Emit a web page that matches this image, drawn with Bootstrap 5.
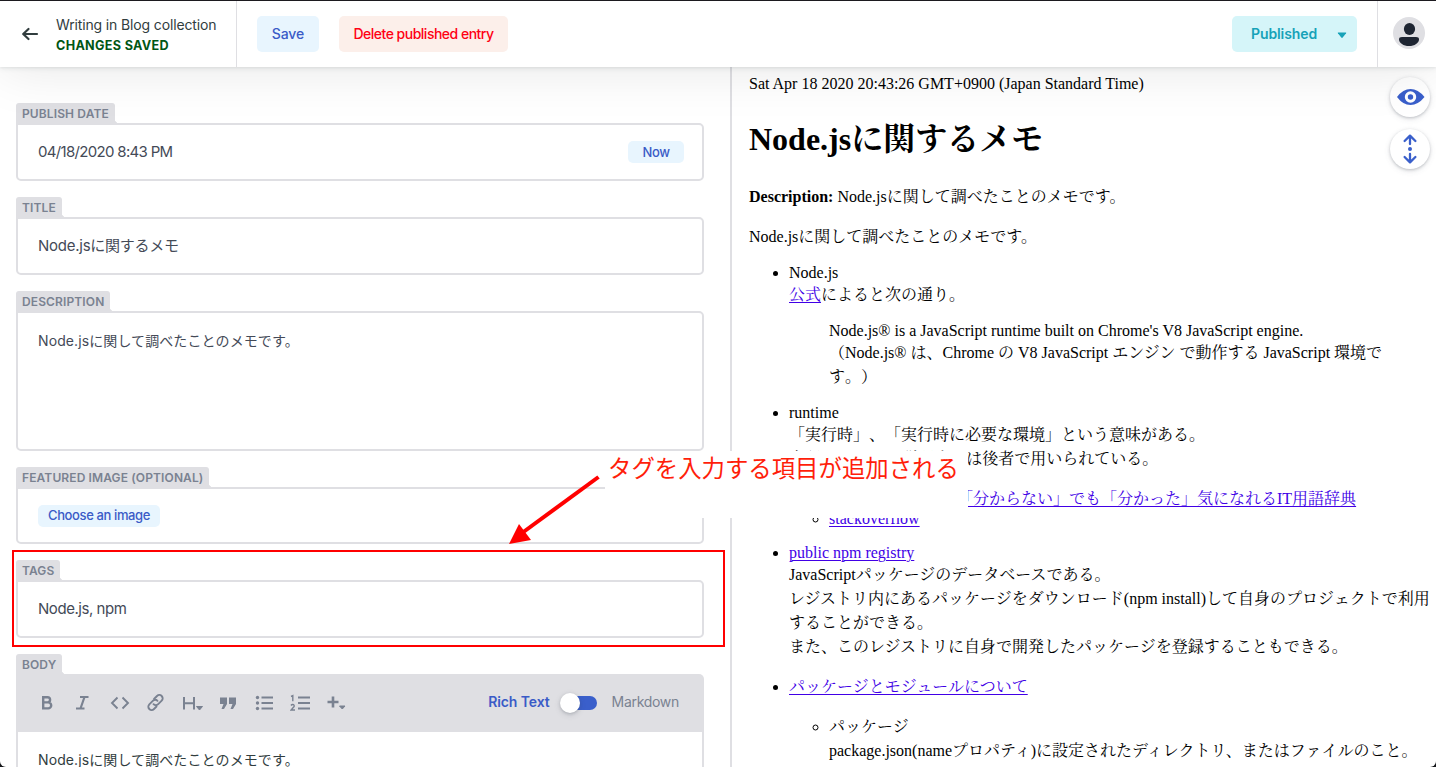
<!DOCTYPE html>
<html lang="ja">
<head>
<meta charset="utf-8">
<meta name="viewport" content="width=device-width, initial-scale=1">
<title>Writing in Blog collection</title>
<link href="https://cdn.jsdelivr.net/npm/bootstrap@5.3.0/dist/css/bootstrap.min.css" rel="stylesheet">
<style>
  html, body { height: 100%; overflow: hidden; background: #15161a; }
  body { font-family: Inter, "Noto Sans CJK JP", sans-serif; font-size: 14px; color: #444a57; }
  .editor { height: 767px; background: #fff; border-radius: 0 0 6px 6px; }
  .topbar { height: 67px; border-top: 1px solid #1c1a1f; background: #fff; z-index: 5; box-shadow: 0 2px 6px rgba(68,74,87,.05), 0 1px 3px rgba(68,74,87,.1), 0 2px 54px rgba(0,0,0,.1); }
  .back-link { width: 237px; border-right: 1px solid #dfdfe3; padding: 0 0 0 21px; }
  .back-text { line-height: 20px; margin: 14px 0 0 17px; }
  .crumb { font-size: 14px; color: #313d3e; letter-spacing: -.14px; }
  .saved { font-size: 12.6px; line-height: 22px; font-weight: 700; color: #005614; letter-spacing: .33px; }
  .tool-btn { height: 36px; border: 0; border-radius: 5px; font-size: 14px; font-weight: 500; padding: 0 0 2px; }
  .btn-soft { background: #e8f5fe; color: #3a5bc7; }
  .btn-save { width: 62px; margin-left: 20px; letter-spacing: -.1px; }
  .btn-del { width: 169px; margin-left: 20px; background: #fcefea; color: #ff0014; letter-spacing: -.5px; }
  .btn-pub { width: 125px; background: #d5f5f9; color: #17a2b8; font-weight: 600; padding: 0 10px 2px 19px; margin-right: 20px; letter-spacing: -.1px; }
  .avatar-cell { width: 59px; border-left: 1px solid #dfdfe3; padding: 0 0 2px 15px; }
  .form-pane { width: 730px; padding: 36px 26px 0 16px; }
  .field { margin-bottom: 16px; }
  .field-label { display: block; width: max-content; height: 20px; line-height: 21px; padding: 0 6px; background: #dfdfe3; color: #7a8291; font-size: 12px; font-weight: 600; letter-spacing: .12px; border-radius: 3px 3px 0 0; position: relative; }
  .field-label::after { content: ""; position: absolute; right: -3px; bottom: 0; width: 3px; height: 3px; background: radial-gradient(circle at 100% 0, transparent 2.6px, #dfdfe3 3px); }
  .field-box { width: 688px; height: 58px; border: 2px solid #dfdfe3; border-radius: 0 5px 5px 5px; background: #fff; padding: 0 18px 0 20px; font-size: 15px; color: #444a57; }
  .field-area { height: 140px; font-size: 14px; padding-top: 17px; letter-spacing: .1px; }
  .small-btn { height: 22px; border: 0; border-radius: 5px; font-size: 13px; font-weight: 500; line-height: 21px; padding: 0; letter-spacing: -.38px; }
  .md-bar { width: 688px; height: 58px; background: #dfdfe3; border-radius: 0 5px 0 0; padding: 0 25px 0 22px; color: #7a8291; }
  .md-bar svg { display: block; margin-right: 12px; }
  .md-body { width: 688px; height: 60px; border: 2px solid #dfdfe3; border-top: 0; padding: 17px 20px; font-size: 14px; color: #313d3e; letter-spacing: .1px; }
  .toggle-track { width: 36px; height: 14px; border-radius: 8px; background: #3a5fcb; margin: 0 15px 0 11px; position: relative; }
  .toggle-knob { position: absolute; left: -1px; top: -3px; width: 20px; height: 20px; border-radius: 50%; background: #fff; box-shadow: 0 2px 6px rgba(68,74,87,.15), 0 1px 3px rgba(68,74,87,.25); }
  .preview-pane { border-left: 2px solid #dfdfe3; padding: 8px 0 0 17px; font: 16px/24px "Liberation Serif", "Noto Serif CJK JP", "Noto Serif JP", "Noto Sans CJK JP", serif; color: #000; white-space: nowrap; overflow: hidden; text-spacing-trim: space-all; }
  .preview-pane h1 { font: 700 32px/48px "Liberation Serif", "Noto Serif CJK JP", "Noto Sans CJK JP", serif; margin: 22.4px 0 20.4px; }
  .preview-pane p { margin: 0 0 16px; }
  .preview-pane ul { margin: 0; padding-left: 40px; }
  .preview-pane ul ul { margin-top: 16px; }
  .preview-pane li { margin-bottom: 16px; }
  .preview-pane li li { margin: 0; }
  .preview-pane a { color: #4100e6; text-decoration: underline; text-underline-offset: 2px; text-decoration-thickness: 1px; }
  .preview-pane blockquote { margin: 16px 40px; font-size: 16px; }
  .lat { line-height: 18px; }
  .preview-pane .jp { line-height: 24px; padding-top: 1px; margin-bottom: -1px; }
  .preview-pane p.jp { margin-bottom: 15px; }
  .wide-mark { font-feature-settings: "chws" 0, "halt" 0, "palt" 0; }
  .round-btn { position: absolute; left: 1390px; width: 40px; height: 40px; border-radius: 50%; background: #fff; box-shadow: 0 2px 6px rgba(68,74,87,.12), 0 1px 3px rgba(68,74,87,.28); }
  .note { position: absolute; left: 605px; top: 451px; width: 363px; height: 67px; background: #fff; color: #ff1e0a; font: 400 23.4px/33px "Noto Sans CJK JP", sans-serif; padding-left: 3px; white-space: nowrap; }
  .mark-layer { position: absolute; left: 0; top: 0; pointer-events: none; }
</style>
</head>
<body>
<div class="editor position-relative overflow-hidden d-flex flex-column">
  <header class="topbar d-flex align-items-stretch position-relative flex-shrink-0">
    <div class="back-link d-flex align-items-center">
      <svg width="18" height="16" viewBox="0 0 18 16" fill="none" stroke="#313d3e" stroke-width="2.2" stroke-linecap="round" stroke-linejoin="round"><path d="M16 8H2.5M7.500 3 2.200 8 7.500 13"/></svg>
      <div class="back-text align-self-start text-nowrap"><div class="crumb">Writing in Blog collection</div><div class="saved">CHANGES SAVED</div></div>
    </div>
    <div class="d-flex align-items-center flex-grow-1">
      <button class="btn tool-btn btn-soft btn-save">Save</button>
      <button class="btn tool-btn btn-del">Delete published entry</button>
      <button class="btn tool-btn btn-pub ms-auto d-flex align-items-center justify-content-between"><span>Published</span><svg width="10" height="7" class="mt-1"><path d="M1.200.5h7.600q.8 0 .3.700L5.700 5.600q-.7.800-1.400 0L.9 1.200Q.4.500 1.200.5z" fill="#17a2b8"/></svg></button>
    </div>
    <div class="avatar-cell d-flex align-items-center">
      <svg width="32" height="32" viewBox="0 0 32 32"><circle cx="16" cy="16" r="16" fill="#dfdfe3"/><ellipse cx="16.5" cy="12" rx="5.6" ry="6" fill="#1e2532"/><path d="M9 20h14q3 0 3 2.2C26 26 21.500 29 16 29S6 26 6 22.200Q6 20 9 20z" fill="#1e2532"/></svg>
    </div>
  </header>
  <main class="d-flex flex-grow-1 overflow-hidden">
    <section class="form-pane flex-shrink-0">
      <div class="field"><label class="field-label">PUBLISH DATE</label><div class="field-box d-flex align-items-center justify-content-between"><span style="letter-spacing:-.68px">04/18/2020 8:43 PM</span><button class="btn small-btn btn-soft" style="width:56px">Now</button></div></div>
      <div class="field"><label class="field-label">TITLE</label><div class="field-box d-flex align-items-center" style="letter-spacing:-.25px">Node.jsに関するメモ</div></div>
      <div class="field"><label class="field-label">DESCRIPTION</label><div class="field-box field-area">Node.jsに関して調べたことのメモです。</div></div>
      <div class="field"><label class="field-label">FEATURED IMAGE (OPTIONAL)</label><div class="field-box d-flex align-items-center" style="height:57px"><button class="btn small-btn btn-soft" style="width:122px">Choose an image</button></div></div>
      <div class="field"><label class="field-label">TAGS</label><div class="field-box d-flex align-items-center" style="letter-spacing:-.45px">Node.js, npm</div></div>
      <div><label class="field-label">BODY</label>
        <div class="md-bar d-flex align-items-center">
          <svg width="24" height="20" fill="none" stroke="#7a8291" stroke-width="2.4"><path d="M5.200 4.200h4.300a2.600 2.600 0 0 1 0 5.200H5.200zM5.200 9.400h5a3 3 0 0 1 0 6H5.200z"/></svg>
          <svg width="24" height="20" fill="none" stroke="#7a8291" stroke-width="2.200"><path d="M6 4h8.500M2 15.500h8.500M10.500 4 6.500 15.500"/></svg>
          <svg width="24" height="20" fill="none" stroke="#7a8291" stroke-width="1.900"><path d="m7.500 4.500-5.500 5.500 5.500 5.500M12.500 4.500l5.500 5.500-5.500 5.500"/></svg>
          <svg width="24" height="20" fill="none" stroke="#7a8291" stroke-width="1.900" stroke-linecap="round"><path d="m8 6 3-3a3.300 3.300 0 0 1 4.700 4.700l-3.500 3.500a3.300 3.300 0 0 1-4.700 0M10.500 13.500l-2.500 2.500a3.300 3.300 0 0 1-4.700-4.700l3.500-3.500a3.300 3.300 0 0 1 4.700 0"/></svg>
          <svg width="24" height="20" fill="none" stroke="#7a8291" stroke-width="2"><path d="M2 4v12.500M12 4v12.500M2 10.300h10"/><path d="M14.500 13.500h6l-3 3.500z" fill="#7a8291" stroke-width="1"/></svg>
          <svg width="24" height="20" fill="#7a8291"><path d="M2 4.500h7v6.500l-3 5H3.500L5.500 11H2zM11 4.500h7v6.500l-3 5h-2.500l2-5H11z"/></svg>
          <svg width="24" height="20" fill="none" stroke="#7a8291" stroke-width="2"><path d="M7.500 4.500H19M7.500 10H19M7.500 15.500H19"/><g fill="#7a8291" stroke="none"><circle cx="3.500" cy="4.500" r="1.700"/><circle cx="3.500" cy="10" r="1.700"/><circle cx="3.500" cy="15.500" r="1.700"/></g></svg>
          <svg width="24" height="20" fill="none" stroke="#7a8291" stroke-width="2"><path d="M8 4.500h12M8 10h12M8 15.500h12"/><path d="m1 3.500 1.800-.8v5.500M1 12.500q1-1.500 2.600-.8 1.400 1.300-.4 2.900L1.200 17H5" stroke-width="1.400"/></svg>
          <svg width="24" height="20" fill="none" stroke="#7a8291" stroke-width="2.600"><path d="M1.500 9h11M7 3.500v11"/><path d="M13.500 13h5.500l-2.700 3z" fill="#7a8291" stroke-width="1"/></svg>
          <div class="ms-auto d-flex align-items-center" style="line-height:20px"><span style="color:#3a5bc7;font-weight:600;letter-spacing:-.1px;margin-top:-2px">Rich Text</span><span class="toggle-track"><span class="toggle-knob"></span></span><span style="letter-spacing:-.3px;margin-top:-2px">Markdown</span></div>
        </div>
        <div class="md-body">Node.jsに関して調べたことのメモです。</div>
      </div>
    </section>
    <section class="preview-pane flex-grow-1">
      <div class="lat">Sat Apr 18 2020 20:43:26 GMT+0900 (Japan Standard Time)</div>
      <h1>Node.jsに関するメモ</h1>
      <p class="jp"><b>Description:</b> Node.jsに関して調べたことのメモです。</p>
      <p class="jp">Node.jsに関して調べたことのメモです。</p>
      <ul>
        <li class="lat">Node.js<div class="jp"><a href="#">公式</a>によると次の通り。</div>
          <blockquote><div class="lat">Node.js® is a JavaScript runtime built on Chrome's V8 JavaScript engine.</div><div class="jp">（Node.js® は、Chrome の V8 JavaScript エンジン で動作する JavaScript 環境で<br>す<span class="d-inline-block">。</span><span class="d-inline-block">）</span></div></blockquote>
        </li>
        <li class="lat">runtime<div class="jp"><span class="d-inline-block">「実行時」</span><span class="d-inline-block">、</span><span class="d-inline-block">「実行時に必要な環境」</span>という意味がある。<br>上記のNode.jsの説明文では後者で用いられている。</div>
          <ul><li class="jp"><a href="#" style="padding-left:128px">「分からない」でも「分かった」気になれるIT用語辞典</a></li><li class="lat"><a href="#">stackoverflow</a></li></ul>
        </li>
        <li class="lat"><a href="#">public npm registry</a><div class="jp">JavaScriptパッケージのデータベースである。<br>レジストリ内にあるパッケージをダウンロード(npm install)して自身のプロジェクトで利用<br>することができる。<br>また、このレジストリに自身で開発したパッケージを登録することもできる。</div></li>
        <li class="jp"><a href="#">パッケージとモジュールについて</a>
          <ul><li>パッケージ<br>package.json(nameプロパティ)に設定されたディレクトリ、またはファイルのこと。</li></ul>
        </li>
      </ul>
    </section>
  </main>
  <button class="round-btn border-0 p-0" style="top:77px" aria-label="preview"><svg class="d-block" width="40" height="40"><path d="M7 20q6-8 13.500-8T34.500 20q-6.500 8-14 8T7 20z" fill="#3a5fcb"/><circle cx="20.500" cy="20" r="4.200" fill="none" stroke="#fff" stroke-width="3"/><circle cx="20.500" cy="20" r="1.700" fill="#3a5fcb"/></svg></button>
  <button class="round-btn border-0 p-0" style="top:129px" aria-label="scroll sync"><svg class="d-block" width="40" height="40" fill="none" stroke="#3a5fcb" stroke-width="2.300" stroke-linecap="round" stroke-linejoin="round"><path d="M20 15V6.800M14.600 12 20 6.600l5.400 5.400M20 25v8.200M14.600 28l5.400 5.400 5.400-5.400"/><circle cx="20" cy="20" r="2" fill="#3a5fcb" stroke="none"/></svg></button>
  <div class="note">タグを入力する項目が追加される</div>
  <svg class="mark-layer" width="1436" height="767"><rect x="13" y="551" width="711" height="95" fill="none" stroke="#f00" stroke-width="2"/><path d="M598.500 477 522 533" stroke="#f00" stroke-width="4"/><path d="m509 544 10-20 12 16z" fill="#f00"/></svg>
</div>
<script src="https://cdn.jsdelivr.net/npm/bootstrap@5.3.0/dist/js/bootstrap.bundle.min.js"></script>
</body>
</html>
